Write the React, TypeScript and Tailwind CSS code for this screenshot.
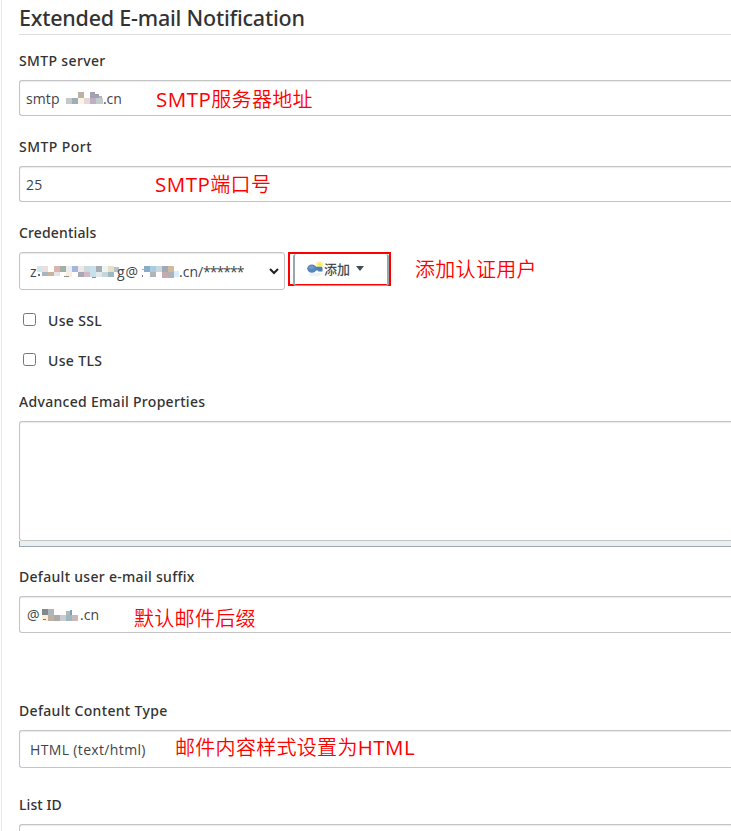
import type { ReactNode } from 'react';

type Cell = [number, number, number, number, string];

function Label({ children, tracking = '' }: { children: ReactNode; tracking?: string }) {
  return (
    <div className={`h-5 whitespace-nowrap font-['Noto_Sans'] text-[14px] font-medium leading-5 text-[#333] ${tracking}`}>
      {children}
    </div>
  );
}

function Field({ children, className }: { children?: ReactNode; className: string }) {
  return (
    <div
      className={`flex items-center whitespace-nowrap rounded-l-[3px] border border-r-0 border-[#c4c4c4] bg-white font-['Open_Sans'] text-[14px] text-[#3f4448] shadow-[inset_0_1px_1px_rgba(0,0,0,0.08)] ${className}`}
    >
      {children}
    </div>
  );
}

function Note({ latin, tail, children, className = '' }: { latin?: string; tail?: string; children: ReactNode; className?: string }) {
  return (
    <span
      className={`whitespace-nowrap font-['Open_Sans','Noto_Sans_CJK_SC',sans-serif] text-[20px] font-[350] leading-6 tracking-[0.3px] text-[#ff0000] ${className}`}
    >
      {latin && <span className="text-[20.5px] font-normal tracking-[0.5px]">{latin}</span>}
      {children}
      {tail && <span className="text-[20.5px] font-normal tracking-[0.5px]">{tail}</span>}
    </span>
  );
}

function Mosaic({ cells, width, height, className = '' }: { cells: Cell[]; width: number; height: number; className?: string }) {
  return (
    <svg width={width} height={height} className={`shrink-0 ${className}`} shapeRendering="crispEdges">
      {cells.map(([x, y, w, h, fill], i) => (
        <rect key={i} x={x} y={y} width={w} height={h} fill={fill} />
      ))}
    </svg>
  );
}

const serverCells: Cell[] = [
  [0, 6, 6, 6, '#c5c7c8'], [6, 6, 6, 6, '#9fadb7'], [12, 0, 6, 6, '#bdb1a6'],
  [12, 6, 6, 6, '#f8f4e6'], [18, 6, 6, 6, '#e7d8d7'], [24, 0, 5, 6, '#a2a0b1'],
  [24, 6, 6, 6, '#beafc2'], [29, 2, 4, 4, '#a2a0b1'], [33, 4, 3, 2, '#b3b3bd'], [30, 6, 7, 6, '#c2cbce'],
];

const userCells: Cell[] = [
  [1, 8, 2, 2, '#6b7075'], [11, 9, 2, 1, '#8d8377'],
  [0, 0, 5, 6, '#cfe5f3'], [5, 0, 6, 6, '#eadfda'], [5, 6, 6, 4, '#a5b6bc'],
  [11, 6, 6, 4, '#c9b39e'], [17, 0, 6, 6, '#d9b5ad'], [17, 6, 6, 4, '#e6e5e5'],
  [23, 0, 6, 6, '#a3afa3'], [29, 0, 6, 6, '#e9eff1'], [29, 6, 6, 5, '#fcedd9'],
  [27, 10, 5, 1, '#8c9094'], [35, 0, 6, 6, '#a5b5dc'], [41, 0, 6, 6, '#eee9e7'],
  [41, 6, 6, 5, '#a9a6b5'], [47, 0, 6, 6, '#ccdae0'], [47, 6, 6, 5, '#d1bac5'],
  [53, 0, 6, 11, '#c8e0ec'], [55, 11, 4, 1, '#8c9094'], [59, 0, 6, 6, '#a4adb1'],
  [59, 6, 6, 5, '#e0e8e9'], [65, 0, 6, 6, '#eef4f6'], [65, 6, 6, 5, '#c5d5da'],
  [71, 0, 6, 6, '#e9dec6'], [71, 6, 6, 5, '#9fb7bf'], [77, 1, 5, 5, '#afc4c4'],
];

const hostCells: Cell[] = [
  [0, 3, 2, 1, '#d6a06c'], [0, 9, 1, 2, '#777b80'],
  [2, 0, 6, 6, '#87acc3'], [8, 0, 6, 6, '#aacbe1'], [8, 6, 6, 5, '#afb6b8'],
  [14, 0, 6, 6, '#c8d8dd'], [20, 0, 6, 6, '#9fa9b9'], [20, 6, 6, 6, '#c5abac'],
  [26, 0, 6, 6, '#d3b99b'], [26, 6, 6, 6, '#aeb1b9'], [32, 5, 5, 6, '#d7edf7'],
];

const suffixCells: Cell[] = [
  [0, 0, 6, 6, '#85888b'], [6, 0, 6, 6, '#aeb6b7'], [0, 6, 6, 6, '#fcefdb'],
  [1, 10, 3, 1, '#777777'], [6, 6, 6, 6, '#bcb1a3'], [12, 6, 6, 6, '#aaaaab'],
  [18, 6, 6, 6, '#cbcacd'], [24, 2, 6, 5, '#b6b9ad'], [28, 1, 2, 5, '#74a5bd'],
  [24, 6, 6, 6, '#9eb7c2'], [30, 6, 6, 6, '#cdb8b9'],
];

function CheckRow({ children }: { children: ReactNode }) {
  return (
    <div className="flex h-5 items-center">
      <span className="mb-px ml-1 h-[13px] w-[13px] rounded-[2.5px] border border-[#767676] bg-white" />
      <span className="ml-3 mt-px font-['Noto_Sans'] text-[14px] font-medium leading-5 tracking-[0.35px] text-[#333]">
        {children}
      </span>
    </div>
  );
}

function KeyIcon() {
  return (
    <svg width="16" height="18" viewBox="0 0 16 18">
      <ellipse cx="8" cy="14.5" rx="6.5" ry="1.8" fill="#f1f1f1" />
      <circle cx="12.6" cy="4.6" r="3.4" fill="#fbf28c" />
      <circle cx="12.6" cy="4.6" r="1.5" fill="#f7ec4e" />
      <path d="M8 6.7h6.3q1.2.3 1.2 1.4v3.5h-4.2V10.4H8Z" fill="#4b7fb8" />
      <ellipse cx="4.9" cy="8.6" rx="4.7" ry="4.2" fill="#5686bd" />
      <ellipse cx="4.3" cy="7.5" rx="2.8" ry="1.7" fill="#7298c5" />
    </svg>
  );
}

export default function App() {
  return (
    <div className="flex h-[831px] w-full overflow-hidden bg-white pl-px">
      <main className="min-w-0 flex-1 border-l border-[#e8e8e8] pl-[17px]">
        <h1 className="h-[35px] whitespace-nowrap border-b border-[#dcdcdc] pt-1 font-['Noto_Sans'] text-[21.5px] font-medium leading-7 tracking-[-0.22px] text-[#333]">
          Extended E-mail Notification
        </h1>

        <div className="mt-4"><Label tracking="tracking-[0.35px]">SMTP server</Label></div>
        <Field className="mt-[9px] h-9 pl-1.5">
          <span className="w-[40px] tracking-[0.1px]">smtp</span>
          <Mosaic cells={serverCells} width={37} height={12} />
          <span className="w-[53px] tracking-[-0.1px]">.cn</span>
          <Note latin="SMTP" className="mt-[2px]">服务器地址</Note>
        </Field>

        <div className="mt-[21px]"><Label tracking="tracking-[0.45px]">SMTP Port</Label></div>
        <Field className="mt-[9px] h-9 pl-1.5">
          <span className="w-[129px] tracking-[0.2px]">25</span>
          <Note latin="SMTP">端口号</Note>
        </Field>

        <div className="mt-[21px]"><Label tracking="tracking-[0.15px]">Credentials</Label></div>
        <div className="mt-[9px] flex h-[38px]">
          <div className="flex w-[266px] items-center whitespace-nowrap rounded-[3px] border border-[#c4c4c4] pl-2.5 font-['Open_Sans'] text-[14px] text-[#3f4448] shadow-[inset_0_1px_1px_rgba(0,0,0,0.08)]">
            <span className="w-[7px]">z</span>
            <Mosaic cells={userCells} width={83} height={12} className="mt-px" />
            <span className="-ml-[3px] w-[25px] tracking-[0.8px]">g@</span>
            <Mosaic cells={hostCells} width={37} height={12} className="mt-px" />
            <span className="w-[90px]">.cn/<span className="tracking-[-1px]">******</span></span>
            <svg width="10" height="7" viewBox="0 0 10 7" className="shrink-0">
              <path d="m1 1 4 4 4-4" fill="none" stroke="#222" strokeWidth="2" />
            </svg>
          </div>
          <div className="ml-[3px] h-[34px] w-[103px] border-2 border-[#ff0000] pl-[3px]">
            <div className="flex h-8 w-24 items-center rounded-[3px] border-x-2 border-b border-[#98a6b0] pb-0.5 pl-3">
              <KeyIcon />
              <span className="ml-px font-['Noto_Sans_CJK_SC',sans-serif] text-[13px] font-medium leading-5 text-[#424b54]">添加</span>
              <span className="ml-1.5 h-0 w-0 border-x-[4.5px] border-t-[5px] border-x-transparent border-t-[#424b54]" />
            </div>
          </div>
          <Note className="ml-[24px] mt-[6px]">添加认证用户</Note>
        </div>

        <div className="mt-5"><CheckRow>Use SSL</CheckRow></div>
        <div className="mt-5"><CheckRow>Use TLS</CheckRow></div>

        <div className="mt-[22px]"><Label tracking="tracking-[0.3px]">Advanced Email Properties</Label></div>
        <Field className="mt-[9px] h-[120px]" />
        <div className="h-1.5 border-b border-l border-[#9aa7b1] bg-[#eaeff2]" />

        <div className="mt-5"><Label tracking="tracking-[0.3px]">Default user e-mail suffix</Label></div>
        <Field className="mt-[9px] h-[37px] pl-[7px]">
          <span className="w-[15px]">@</span>
          <Mosaic cells={suffixCells} width={36} height={12} />
          <span className="ml-[2px] w-[54px]">.cn</span>
          <Note className="mt-[8px]">默认邮件后缀</Note>
        </Field>

        <div className="mt-[68px]"><Label tracking="tracking-[0.33px]">Default Content Type</Label></div>
        <Field className="mt-[9px] h-[38px] pl-2.5">
          <span className="w-[145px] tracking-[0.35px]">HTML (text/html)</span>
          <Note tail="HTML" className="-mt-[3px]">邮件内容样式设置为</Note>
        </Field>

        <div className="mt-[27px]"><Label tracking="tracking-[0.1px]">List ID</Label></div>
        <Field className="mt-[9px] h-9" />
      </main>
    </div>
  );
}
